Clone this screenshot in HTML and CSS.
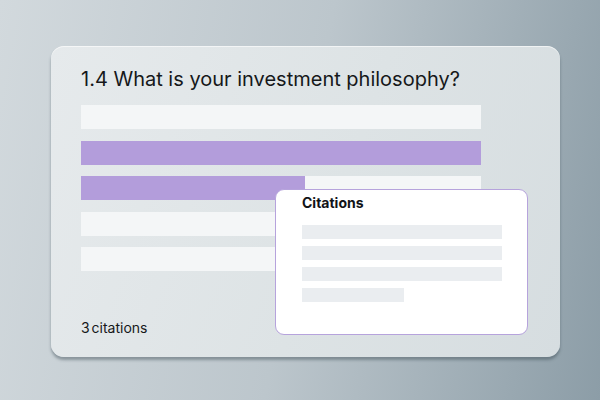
FILE: index.html
```html
<!DOCTYPE html>
<html>
<head>
<meta charset="utf-8">
<link rel="stylesheet" href="styles.css">
</head>
<body>
<div class="stage">
  <div class="card">
    <h1 class="title">1.4 What is your investment philosophy?</h1>
    <div class="bars">
      <div class="bar"></div>
      <div class="bar bar-full"></div>
      <div class="bar"><div class="fill" style="width:224px"></div></div>
      <div class="bar"></div>
      <div class="bar"></div>
    </div>
    <div class="footer">3 citations</div>
    <div class="popup">
      <div class="popup-title">Citations</div>
      <div class="lines">
        <div class="line"></div>
        <div class="line"></div>
        <div class="line"></div>
        <div class="line short"></div>
      </div>
    </div>
  </div>
</div>
</body>
</html>
```
FILE: styles.css
```css
html, body {
  margin: 0;
  padding: 0;
}
body {
  width: 600px;
  height: 400px;
  overflow: hidden;
  font-family: Inter, "Liberation Sans", sans-serif;
}
.stage {
  width: 600px;
  height: 400px;
  box-sizing: border-box;
  padding: 46px 40px 0 51px;
  background: linear-gradient(100deg, #d2d9dd 0%, #bcc6cc 50%, #8c9da7 100%);
}
.card {
  position: relative;
  width: 509px;
  height: 311px;
  box-sizing: border-box;
  padding: 21px 30px 21px 30px;
  border-radius: 13px;
  background: linear-gradient(110deg, #e6eaec 0%, #dde3e5 55%, #d6dde0 100%);
  box-shadow: 0 3px 3px rgba(60, 75, 85, 0.45), inset 0 1px 0 rgba(255,255,255,0.6);
  display: flex;
  flex-direction: column;
}
.title {
  margin: 0;
  font-size: 20px;
  line-height: 24px;
  font-weight: 400;
  letter-spacing: 0;
  color: #16181a;
}
.bars {
  margin-top: 14px;
  display: flex;
  flex-direction: column;
  gap: 11.5px;
  width: 400px;
}
.bar {
  height: 24px;
  background: #f4f6f7;
}
.bar-full {
  background: #b39ddb;
}
.fill {
  height: 100%;
  background: #b39ddb;
}
.footer {
  margin-top: auto;
  font-size: 14px;
  line-height: 17px;
  color: #16181a;
  word-spacing: -2px;
}
.popup {
  position: absolute;
  left: 224px;
  top: 143px;
  width: 253px;
  height: 146px;
  box-sizing: border-box;
  border: 1px solid #b6a3dc;
  border-radius: 9px;
  background: #ffffff;
  padding: 4px 25px 0 26px;
}
.popup-title {
  font-size: 14px;
  line-height: 17px;
  font-weight: 700;
  color: #111316;
}
.lines {
  margin-top: 14px;
  display: flex;
  flex-direction: column;
  gap: 7px;
}
.line {
  width: 200px;
  height: 14px;
  background: #eaedf0;
}
.line.short {
  width: 102px;
}
```
